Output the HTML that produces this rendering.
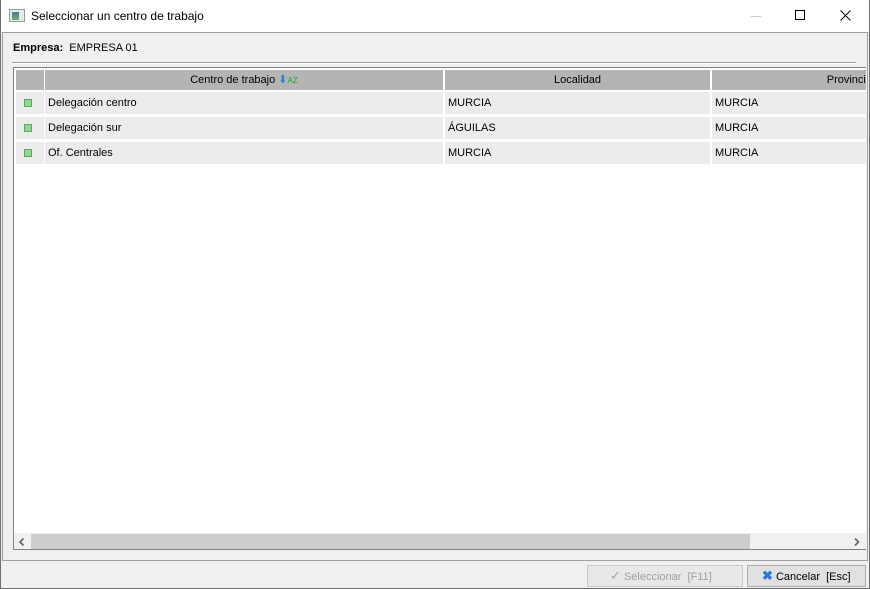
<!DOCTYPE html><html><head><style>
*{margin:0;padding:0;box-sizing:border-box}
body{width:870px;height:589px;background:#f0f0f0;font-family:"Liberation Sans",sans-serif;font-size:11px;color:#000;position:relative;overflow:hidden}
.a{position:absolute}
</style></head><body>
<div class="a" style="left:0;top:0;width:870px;height:589px;border:1px solid #6e6e6e;border-top:none"></div>
<div class="a" style="left:1px;top:0;width:868px;height:32px;background:#fff"></div>
<div class="a" style="left:9px;top:9px;width:16px;height:13px;border:1px solid #999;background:#e8e8e8"><div class="a" style="left:2px;top:2px;width:7px;height:8px;background:linear-gradient(#4a7a9a,#6fb06f)"></div></div>
<div class="a" style="left:31px;top:9px;font-size:12px">Seleccionar un centro de trabajo</div>
<div class="a" style="left:751px;top:16px;width:10px;height:1px;background:#ccc"></div>
<div class="a" style="left:795px;top:10px;width:10px;height:10px;border:1px solid #000"></div>
<svg class="a" style="left:840px;top:10px" width="11" height="11"><path d="M0.5 0.5L10.5 10.5M10.5 0.5L0.5 10.5" stroke="#000" stroke-width="1"/></svg>
<div class="a" style="left:2px;top:32px;width:866px;height:529px;border:1px solid #a0a0a0"></div>
<div class="a" style="left:13px;top:42px"><b>Empresa:</b>&nbsp; EMPRESA 01</div>
<div class="a" style="left:12px;top:62px;width:844px;height:2px;border-top:1px solid #a0a0a0;border-bottom:1px solid #fff"></div>
<div class="a" style="left:13px;top:67px;width:853px;height:483px;border:1px solid #828282;border-right:none;background:#fff;overflow:hidden">
 <div class="a" style="left:2px;top:2px;width:28px;height:20px;background:#b4b4b4"></div>
 <div class="a" style="left:31px;top:2px;width:398px;height:20px;background:#b4b4b4;text-align:center;line-height:20px">Centro de trabajo <span style="color:#2a7fd8;font-size:11px">⬇</span><span style="color:#2a2;font-size:8px">AZ</span></div>
 <div class="a" style="left:431px;top:2px;width:265px;height:20px;background:#b4b4b4;text-align:center;line-height:20px">Localidad</div>
 <div class="a" style="left:698px;top:2px;width:160px;height:20px;background:#b4b4b4;text-align:right;line-height:20px;white-space:nowrap">Provincia</div>
 <div class="a" style="left:0;top:22px;width:853px;height:2px;background:#fff"></div>
 <div class="a" style="top:24px;left:0;width:853px">
  <div style="position:relative;height:25px">
   <div class="a" style="left:2px;top:0;width:28px;height:22px;background:#ececec"><div class="a" style="left:8px;top:7px;width:8px;height:8px;background:#8fd88f;border:1px solid #5aa95a"></div></div>
   <div class="a" style="left:31px;top:0;width:398px;height:22px;background:#ececec;line-height:22px;padding-left:3px">Delegación centro</div>
   <div class="a" style="left:431px;top:0;width:265px;height:22px;background:#ececec;line-height:22px;padding-left:3px">MURCIA</div>
   <div class="a" style="left:698px;top:0;width:160px;height:22px;background:#ececec;line-height:22px;padding-left:3px">MURCIA</div>
  </div>
  <div style="position:relative;height:25px">
   <div class="a" style="left:2px;top:0;width:28px;height:22px;background:#ececec"><div class="a" style="left:8px;top:7px;width:8px;height:8px;background:#8fd88f;border:1px solid #5aa95a"></div></div>
   <div class="a" style="left:31px;top:0;width:398px;height:22px;background:#ececec;line-height:22px;padding-left:3px">Delegación sur</div>
   <div class="a" style="left:431px;top:0;width:265px;height:22px;background:#ececec;line-height:22px;padding-left:3px">ÁGUILAS</div>
   <div class="a" style="left:698px;top:0;width:160px;height:22px;background:#ececec;line-height:22px;padding-left:3px">MURCIA</div>
  </div>
  <div style="position:relative;height:25px">
   <div class="a" style="left:2px;top:0;width:28px;height:22px;background:#ececec"><div class="a" style="left:8px;top:7px;width:8px;height:8px;background:#8fd88f;border:1px solid #5aa95a"></div></div>
   <div class="a" style="left:31px;top:0;width:398px;height:22px;background:#ececec;line-height:22px;padding-left:3px">Of. Centrales</div>
   <div class="a" style="left:431px;top:0;width:265px;height:22px;background:#ececec;line-height:22px;padding-left:3px">MURCIA</div>
   <div class="a" style="left:698px;top:0;width:160px;height:22px;background:#ececec;line-height:22px;padding-left:3px">MURCIA</div>
  </div>
 </div>
 <div class="a" style="left:0;top:465px;width:853px;height:17px;background:#f0f0f0">
  <div class="a" style="left:17px;top:1px;width:719px;height:15px;background:#cdcdcd"></div>
  <svg class="a" style="left:5px;top:5px" width="6" height="8"><path d="M4.5 0.5L1 4L4.5 7.5" stroke="#606060" stroke-width="1.6" fill="none"/></svg>
  <svg class="a" style="left:840px;top:5px" width="6" height="8"><path d="M1 0.5L4.5 4L1 7.5" stroke="#606060" stroke-width="1.6" fill="none"/></svg>
 </div>
</div>
<div class="a" style="left:587px;top:565px;width:156px;height:22px;border:1px solid #c8c8c8;background:#e8e8e8;color:#a0a0a0;line-height:20px;padding-left:22px"><span style="font-size:13px">✓</span> Seleccionar&nbsp; [F11]</div>
<div class="a" style="left:747px;top:565px;width:119px;height:22px;border:1px solid #adadad;background:#e1e1e1;line-height:20px;padding-left:14px"><span style="color:#2a78d8;font-weight:bold;font-size:13px">✖</span> Cancelar&nbsp; [Esc]</div>
</body></html>
